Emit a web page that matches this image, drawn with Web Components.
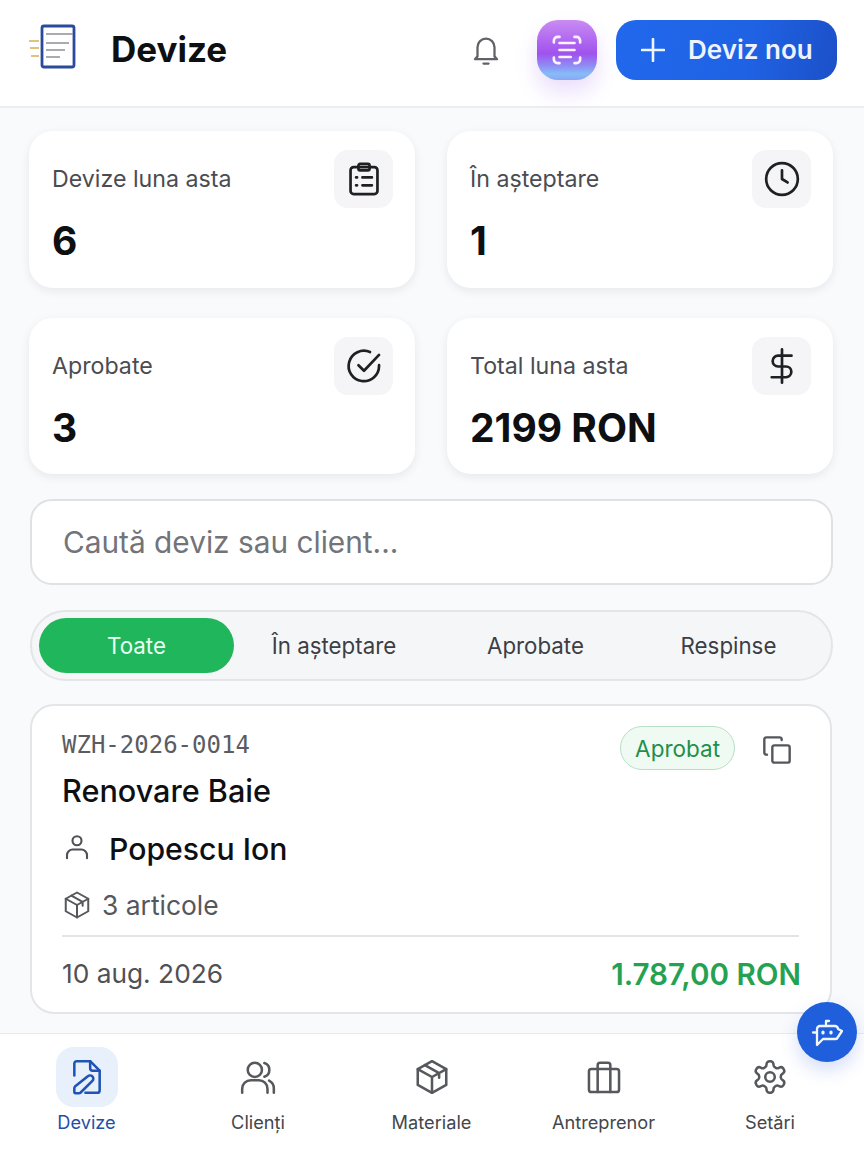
<!DOCTYPE html>
<html lang="ro">
<head>
<meta charset="utf-8">
<title>Devize</title>
<style>
  html, body { margin: 0; padding: 0; }
  body { width: 864px; height: 1152px; overflow: hidden; background: #f9fafc; font-family: Inter, "Liberation Sans", sans-serif; color: #111214; }
  #app { position: relative; display: flex; flex-direction: column; height: 1152px; }
</style>
</head>
<body>
<div id="app">
  <app-header title="Devize" action="Deviz nou"></app-header>
  <page-main>
    <stat-grid>
      <stat-card label="Devize luna asta" value="6" icon="clipboard"></stat-card>
      <stat-card label="În așteptare" value="1" icon="clock"></stat-card>
      <stat-card label="Aprobate" value="3" icon="check"></stat-card>
      <stat-card label="Total luna asta" value="2199 RON" icon="dollar"></stat-card>
    </stat-grid>
    <search-box placeholder="Caută deviz sau client..."></search-box>
    <filter-tabs active="0" items="Toate|În așteptare|Aprobate|Respinse"></filter-tabs>
    <quote-card code="WZH-2026-0014" title="Renovare Baie" client="Popescu Ion" items="3 articole" date="10 aug. 2026" total="1.787,00 RON" status="Aprobat"></quote-card>
  </page-main>
  <bottom-nav>
    <nav-item label="Devize" icon="edit" active></nav-item>
    <nav-item label="Clienți" icon="users"></nav-item>
    <nav-item label="Materiale" icon="box"></nav-item>
    <nav-item label="Antreprenor" icon="case"></nav-item>
    <nav-item label="Setări" icon="gear"></nav-item>
  </bottom-nav>
  <chat-fab></chat-fab>
</div>

<script>
// all the stroke icons live here, 24x24 box
const ICONS = {
  bell: '<path d="M6 16.5V10a6 6 0 0 1 12 0v6.5l1.8 2H4.2z"/><path d="M10.2 21.6h3.6"/>',
  clipboard: '<rect x="3.5" y="4.5" width="17" height="17" rx="2"/><rect x="8.5" y="2.5" width="7" height="4" rx="1"/><path d="M11 11h6M11 16h6M7 11h.6M7 16h.6"/>',
  clock: '<circle cx="12" cy="12" r="10"/><path d="M12 6.5V12l3.5 2.2"/>',
  check: '<path d="M21.5 11.5V12a9.6 9.6 0 1 1-5.7-8.8"/><path d="M8.5 11.5l3.5 3.5 9.5-10"/>',
  dollar: '<path d="M12 1.5v21"/><path d="M18 5.5H9.5a3.4 3.4 0 0 0 0 6.8h5a3.4 3.4 0 0 1 0 6.8H5.5"/>',
  user: '<circle cx="12" cy="7" r="3.6"/><path d="M4 21v-2.5A4.5 4.5 0 0 1 8.5 14h7a4.5 4.5 0 0 1 4.5 4.5V21"/>',
  box: '<path d="M12 2l9 5v10l-9 5-9-5V7z"/><path d="M3 7l9 5 9-5M12 12v10M7.5 4.5l9 5v3"/>',
  copy: '<rect x="8.5" y="8.5" width="13" height="13" rx="1.5"/><path d="M4.5 15.5h-.5a1.5 1.5 0 0 1-1.5-1.5V4A1.5 1.5 0 0 1 4 2.5h10A1.5 1.5 0 0 1 15.5 4v.5"/>',
  edit: '<path d="M4 11V3.5A1.5 1.5 0 0 1 5.5 2H14l6 6v12.5a1.5 1.5 0 0 1-1.5 1.5H11"/><path d="M14 2v4.5A1.5 1.5 0 0 0 15.5 8H20"/><path d="M12.5 11.6a2 2 0 0 1 2.9 2.9L8 21.800a1.500 1.500 0 0 1-1 .4H4.500a.5.5 0 0 1-.5-.5V19a1.500 1.500 0 0 1 .4-1z"/>',
  users: '<circle cx="10" cy="7.500" r="4.500"/><path d="M2 22v-2.500A5.500 5.500 0 0 1 7.500 14h5a5.500 5.500 0 0 1 5.500 5.500V22"/><path d="M16 3.200a4.500 4.500 0 0 1 0 8.600M19 14.300a5.500 5.500 0 0 1 3 5V22"/>',
  case: '<rect x="2.500" y="7" width="19" height="14.500" rx="1.500"/><path d="M8 21.500V4.500A1.500 1.500 0 0 1 9.500 3h5A1.500 1.500 0 0 1 16 4.500v17"/>',
  gear: '<circle cx="12" cy="12" r="3"/><path d="M12.200 2h-.4a2 2 0 0 0-2 2v.2a2 2 0 0 1-1 1.700l-.4.300a2 2 0 0 1-2 0l-.2-.1a2 2 0 0 0-2.700.700l-.2.400a2 2 0 0 0 .7 2.700l.2.100a2 2 0 0 1 1 1.700v.5a2 2 0 0 1-1 1.700l-.2.100a2 2 0 0 0-.7 2.700l.2.400a2 2 0 0 0 2.700.7l.2-.1a2 2 0 0 1 2 0l.4.300a2 2 0 0 1 1 1.700v.2a2 2 0 0 0 2 2h.4a2 2 0 0 0 2-2v-.2a2 2 0 0 1 1-1.700l.4-.3a2 2 0 0 1 2 0l.2.100a2 2 0 0 0 2.700-.7l.2-.4a2 2 0 0 0-.7-2.700l-.2-.1a2 2 0 0 1-1-1.700v-.5a2 2 0 0 1 1-1.700l.2-.1a2 2 0 0 0 .7-2.700l-.2-.4a2 2 0 0 0-2.700-.7l-.2.100a2 2 0 0 1-2 0l-.4-.3a2 2 0 0 1-1-1.700V4a2 2 0 0 0-2-2z"/>'
};

class XIcon extends HTMLElement {
  connectedCallback() {
    const size = this.getAttribute('size') || 24;
    const sw = this.getAttribute('stroke') || 2;
    this.attachShadow({mode: 'open'}).innerHTML = `
      <style>:host { display: block; width: ${size}px; height: ${size}px; flex: none; } svg { display: block; }</style>
      <svg width="${size}" height="${size}" viewBox="0 0 24 24" fill="none" stroke="currentColor" stroke-width="${sw}" stroke-linecap="round" stroke-linejoin="round">${ICONS[this.getAttribute('name')] || ''}</svg>`;
  }
}

class AppHeader extends HTMLElement {
  connectedCallback() {
    this.attachShadow({mode: 'open'}).innerHTML = `
      <style>
        :host { display: flex; align-items: center; height: 100px; padding: 0 27px 6px 28px; background: #fff; border-bottom: 2px solid #ecedf0; flex: none; }
        .logo { width: 48px; height: 48px; flex: none; margin-top: -4px; }
        h1 { margin: -2px 0 0 35px; font-size: 35px; line-height: 40px; font-weight: 700; color: #0e0f12; flex: 1; }
        .bell { color: #606267; margin-right: 34px; }
        .ai { width: 60px; height: 60px; border-radius: 21px; flex: none; margin-right: 19px; display: flex; align-items: center; justify-content: center;
          background: linear-gradient(180deg, #c98cf2 0%, #b36cf0 30%, #a052ee 56%, #8f8cf4 76%, #86bcf8 90%, #8aa6f6 100%);
          box-shadow: 0 12px 22px rgba(150, 90, 240, .2); }
        button { display: flex; align-items: center; height: 60px; width: 221px; padding: 0 0 2px 25px; box-sizing: border-box; border: 0; border-radius: 20px; color: #eef4ff; font: 600 26px Inter, "Liberation Sans", sans-serif; background: linear-gradient(100deg, #2168ec 0%, #1f62e4 60%, #1c50c8 100%); }
        button svg { margin: 2px 23px 0 0; }
      </style>
      <svg class="logo" viewBox="0 0 48 48" fill="none">
        <rect x="14" y="2" width="32" height="41" rx="2" stroke="#2a4b9b" stroke-width="2.800" fill="#fff"/>
        <path d="M18 10h27M18 19h23M18 26h19M18 33h14" stroke="#8f9095" stroke-width="1.500"/>
        <path d="M1 17h10M2 24h9M3 32h8" stroke="#e0c27a" stroke-width="1.800"/>
      </svg>
      <h1>${this.getAttribute('title')}</h1>
      <x-icon class="bell" name="bell" size="34" stroke="1.600"></x-icon>
      <div class="ai">
        <svg width="30" height="30" viewBox="0 0 32 32" fill="none" stroke="#fdf2ff" stroke-width="2.800" stroke-linecap="round" stroke-linejoin="round">
          <path d="M2 8V6a4 4 0 0 1 4-4h2M24 2h2a4 4 0 0 1 4 4v2M2 24v2a4 4 0 0 0 4 4h2M24 30h2a4 4 0 0 0 4-4v-2"/>
          <path d="M8 8.500h16M8 16h16M8 23.500h12"/>
        </svg>
      </div>
      <button>
        <svg width="24" height="24" viewBox="0 0 24 24" fill="none" stroke="currentColor" stroke-width="2.600" stroke-linecap="round"><path d="M12 1v22M1 12h22"/></svg>
        ${this.getAttribute('action')}
      </button>`;
  }
}

class PageMain extends HTMLElement {
  constructor() {
    super();
    this.attachShadow({mode: 'open'}).innerHTML = `
      <style>:host { display: flex; flex-direction: column; flex: 1; min-height: 0; padding: 23px 31px 0 29px; }</style>
      <slot></slot>`;
  }
}

class StatGrid extends HTMLElement {
  constructor() {
    super();
    this.attachShadow({mode: 'open'}).innerHTML = `
      <style>:host { display: grid; grid-template-columns: 386px 386px; column-gap: 32px; row-gap: 30px; grid-template-rows: 157px 156px; }</style>
      <slot></slot>`;
  }
}

class StatCard extends HTMLElement {
  connectedCallback() {
    this.attachShadow({mode: 'open'}).innerHTML = `
      <style>
        :host { display: block; position: relative; box-sizing: border-box; padding: 33px 23px 0; background: #fff; border-radius: 24px; box-shadow: 0 3px 10px rgba(20, 24, 40, .08); }
        .label { font-size: 23.2px; line-height: 30px; color: #4a4c52; }
        .value { margin-top: 23px; font-size: 39px; line-height: 48px; font-weight: 700; color: #0e0f12; }
        .tile { position: absolute; top: 19px; right: 22px; width: 59px; height: 58px; border-radius: 14px; background: #f5f5f7; display: flex; align-items: center; justify-content: center; color: #1e2024; }
      </style>
      <div class="label">${this.getAttribute('label')}</div>
      <div class="value">${this.getAttribute('value')}</div>
      <div class="tile"><x-icon name="${this.getAttribute('icon')}" size="38" stroke="1.700"></x-icon></div>`;
  }
}

class SearchBox extends HTMLElement {
  connectedCallback() {
    this.attachShadow({mode: 'open'}).innerHTML = `
      <style>
        :host { display: flex; align-items: center; box-sizing: border-box; height: 86px; margin: 25px 0 0 1px; padding: 0 31px; background: #fff; border: 2px solid #e0e1e5; border-radius: 22px; color: #727479; font-size: 29.8px; }
      </style>
      <span>${this.getAttribute('placeholder')}</span>`;
  }
}

class FilterTabs extends HTMLElement {
  connectedCallback() {
    const active = Number(this.getAttribute('active'));
    const tabs = this.getAttribute('items').split('|').map((t, i) =>
      `<div class="tab${i === active ? ' on' : ''}">${t}</div>`).join('');
    this.attachShadow({mode: 'open'}).innerHTML = `
      <style>
        :host { display: grid; grid-template-columns: 195px 200px 203px 183px; box-sizing: border-box; height: 71px; margin: 25px 0 0 1px; padding: 6px 7px; background: #f5f6f8; border: 2px solid #e4e5e8; border-radius: 36px; }
        .tab { display: flex; align-items: center; justify-content: center; font-size: 22.3px; color: #3c3e44; border-radius: 28px; }
        .on { background: #20b65c; color: #eafff2; }
      </style>
      ${tabs}`;
  }
}

class QuoteCard extends HTMLElement {
  connectedCallback() {
    const a = n => this.getAttribute(n);
    this.attachShadow({mode: 'open'}).innerHTML = `
      <style>
        :host { display: block; position: relative; box-sizing: border-box; height: 310px; margin: 23px 1px 0 1px; padding: 23px 31px 0 30px; background: #fff; border: 2px solid #e4e5e8; border-radius: 24px; }
        .code { font: 24px/32px "DejaVu Sans Mono", "Liberation Mono", monospace; color: #5a5c61; }
        .title { margin-top: 11px; font-size: 30.6px; line-height: 38px; font-weight: 500; color: #0e0f12; }
        .row { display: flex; align-items: center; }
        .client { margin-top: 20px; font-size: 30.2px; line-height: 38px; font-weight: 500; color: #0e0f12; }
        .client x-icon { color: #4f5156; margin-right: 17px; margin-top: -5px; }
        .items { margin-top: 18px; font-size: 26.4px; line-height: 38px; color: #55575c; }
        .items x-icon { margin-right: 10px; }
        hr { margin: 11px 0 0; border: 0; border-top: 2px solid #e3e4e7; }
        .foot { display: flex; justify-content: space-between; align-items: center; margin-top: 18px; line-height: 38px; }
        .date { font-size: 26.3px; color: #4f5156; }
        .total { font-size: 29.6px; font-weight: 600; color: #25a152; margin-right: -2px; }
        .badge { position: absolute; top: 20px; right: 95px; box-sizing: border-box; height: 44px; display: flex; align-items: center; padding: 0 14px; font-size: 22.5px; color: #1f8f4c; background: #eefaf2; border: 1.5px solid #b9e0c6; border-radius: 22px; }
        .copy { position: absolute; top: 28px; right: 37px; color: #55575c; }
      </style>
      <div class="code">${a('code')}</div>
      <div class="title">${a('title')}</div>
      <div class="row client"><x-icon name="user" size="30" stroke="1.700"></x-icon>${a('client')}</div>
      <div class="row items"><x-icon name="box" size="30" stroke="1.600"></x-icon>${a('items')}</div>
      <hr>
      <div class="foot"><span class="date">${a('date')}</span><span class="total">${a('total')}</span></div>
      <div class="badge">${a('status')}</div>
      <x-icon class="copy" name="copy" size="32" stroke="1.800"></x-icon>`;
  }
}

class BottomNav extends HTMLElement {
  constructor() {
    super();
    this.attachShadow({mode: 'open'}).innerHTML = `
      <style>:host { display: grid; grid-template-columns: 173px 170px 177px 167px 166px; flex: none; height: 118px; background: #fff; border-top: 1px solid #e9eaed; }</style>
      <slot></slot>`;
  }
}

class NavItem extends HTMLElement {
  connectedCallback() {
    const on = this.hasAttribute('active');
    this.attachShadow({mode: 'open'}).innerHTML = `
      <style>
        :host { display: flex; flex-direction: column; align-items: center; padding-top: 13px; color: ${on ? '#1f54b4' : '#56585d'}; }
        .ic { width: 62px; height: 60px; border-radius: 18px; display: flex; align-items: center; justify-content: center; background: ${on ? '#e8f0fb' : 'transparent'}; }
        .tx { margin-top: 2px; font-size: 18.2px; line-height: 26px; color: ${on ? '#1f4fa8' : '#44464b'}; }
      </style>
      <div class="ic"><x-icon name="${this.getAttribute('icon')}" size="38" stroke="1.600"></x-icon></div>
      <div class="tx">${this.getAttribute('label')}</div>`;
  }
}

class ChatFab extends HTMLElement {
  connectedCallback() {
    this.attachShadow({mode: 'open'}).innerHTML = `
      <style>
        :host { position: absolute; left: 797px; top: 1002px; width: 60px; height: 60px; border-radius: 50%; background: #1f5fdc; display: flex; align-items: center; justify-content: center; box-shadow: 0 8px 18px rgba(40, 90, 220, .2); }
      </style>
      <svg width="32" height="32" viewBox="0 0 32 32" fill="none" stroke="#f2f6ff" stroke-width="2.300" stroke-linecap="round" stroke-linejoin="round">
        <path d="M15 10V5h3"/>
        <path d="M9 10h15a3 3 0 0 1 3 3l4 2-4 6a3 3 0 0 1-3 2H12l-6 6V13a3 3 0 0 1 3-3z"/>
        <path d="M2 16.500h4"/>
        <path d="M12 16v1M20 16v1" stroke-width="3.200"/>
      </svg>`;
  }
}

customElements.define('x-icon', XIcon);
customElements.define('app-header', AppHeader);
customElements.define('page-main', PageMain);
customElements.define('stat-grid', StatGrid);
customElements.define('stat-card', StatCard);
customElements.define('search-box', SearchBox);
customElements.define('filter-tabs', FilterTabs);
customElements.define('quote-card', QuoteCard);
customElements.define('bottom-nav', BottomNav);
customElements.define('nav-item', NavItem);
customElements.define('chat-fab', ChatFab);
</script>
</body>
</html>
